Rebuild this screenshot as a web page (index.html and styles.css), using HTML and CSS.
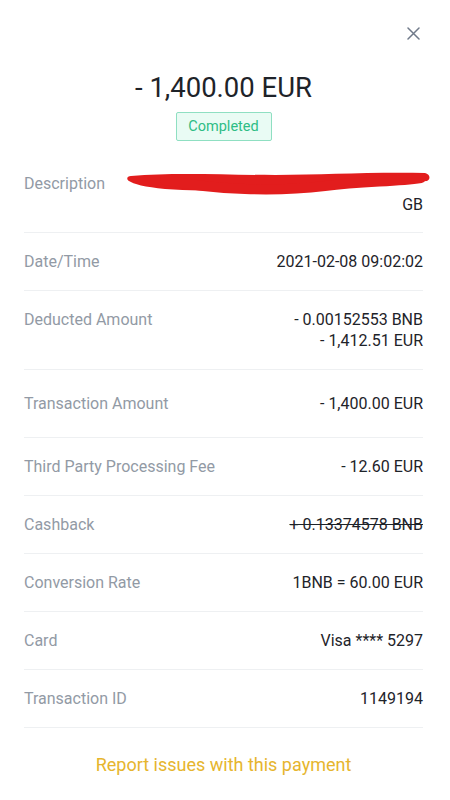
FILE: index.html
```html
<!DOCTYPE html>
<html>
<head>
  <meta charset="utf-8">
  <title>Payment Details</title>
  <link rel="stylesheet" href="styles.css">
</head>
<body>
  <div class="sheet">
    <div class="top">
      <button class="close" aria-label="Close">
        <svg width="13" height="13" viewBox="0 0 13 13">
          <path d="M1 1L12 12M12 1L1 12" stroke="#707a8a" stroke-width="1.5" stroke-linecap="round"/>
        </svg>
      </button>
    </div>

    <div class="summary">
      <h1 class="amount">- 1,400.00 EUR</h1>
      <span class="status">Completed</span>
    </div>

    <div class="details">
      <div class="row desc">
        <span class="label">Description</span>
        <span class="value">
          <span class="redacted">
            <svg width="306" height="26" viewBox="0 0 306 26">
              <path d="M6 6 C50 2 100 5 150 5 C200 5 240 2 300 3 C305 4 306 9 302 11 C260 14 220 15 180 18 C140 22 90 22 40 19 C20 17 8 14 4 11 C1 9 2 6 6 6 Z" fill="#e21d1d"/>
              <path d="M40 10 C90 20 150 22 200 16 C240 11 270 12 296 8" stroke="#e21d1d" stroke-width="10" fill="none" stroke-linecap="round"/>
            </svg>
          </span>
          <span>GB</span>
        </span>
      </div>
      <div class="row">
        <span class="label">Date/Time</span>
        <span class="value">2021-02-08 09:02:02</span>
      </div>
      <div class="row deducted">
        <span class="label">Deducted Amount</span>
        <span class="value">
          <span>- 0.00152553 BNB</span>
          <span>- 1,412.51 EUR</span>
        </span>
      </div>
      <div class="row tall">
        <span class="label">Transaction Amount</span>
        <span class="value">- 1,400.00 EUR</span>
      </div>
      <div class="row">
        <span class="label">Third Party Processing Fee</span>
        <span class="value">- 12.60 EUR</span>
      </div>
      <div class="row">
        <span class="label">Cashback</span>
        <span class="value struck">+ 0.13374578 BNB</span>
      </div>
      <div class="row">
        <span class="label">Conversion Rate</span>
        <span class="value">1BNB = 60.00 EUR</span>
      </div>
      <div class="row">
        <span class="label">Card</span>
        <span class="value">Visa **** 5297</span>
      </div>
      <div class="row">
        <span class="label">Transaction ID</span>
        <span class="value">1149194</span>
      </div>
    </div>

    <a class="report" href="#">Report issues with this payment</a>
  </div>
</body>
</html>
```

FILE: styles.css
```css
body {
  margin: 0;
  background-color: #fff;
  font-family: Roboto, "Liberation Sans", sans-serif;
  color: #1e2329;
}

.sheet {
  padding: 0 27px 0 24px;
}

.top {
  height: 64px;
  display: flex;
  justify-content: flex-end;
  align-items: flex-start;
}

.close {
  margin-top: 27px;
  margin-right: 3px;
  padding: 0;
  border: none;
  background: none;
  cursor: pointer;
}

.summary {
  display: flex;
  flex-direction: column;
  align-items: center;
}

.amount {
  margin: 8px 0 0 0;
  font-size: 27.5px;
  font-weight: 400;
  line-height: 32px;
  color: #1e2329;
}

.status {
  margin-top: 8px;
  width: 94px;
  height: 27px;
  line-height: 27px;
  text-align: center;
  font-size: 14.5px;
  color: #2ebd85;
  background-color: #e9fbf4;
  border: 1px solid #8fdfc2;
  border-radius: 2px;
}

.details {
  margin-top: 14px;
}

.row {
  display: flex;
  justify-content: space-between;
  align-items: flex-start;
  padding: 18px 0;
  line-height: 21px;
  font-size: 16px;
  border-bottom: 1px solid #eef0f2;
}

.row.tall {
  padding: 23px 0;
}

.row.desc {
  padding-bottom: 17px;
}

.label {
  color: #929aa5;
}

.value {
  display: flex;
  flex-direction: column;
  align-items: flex-end;
  text-align: right;
  color: #1e2329;
}

.redacted {
  height: 21px;
  margin-right: -8px;
}

.redacted svg {
  display: block;
  margin-top: -3px;
}

.struck {
  text-decoration: line-through;
}

.report {
  display: block;
  margin-top: 26px;
  text-align: center;
  font-size: 18px;
  color: #e6b52e;
  text-decoration: none;
}
```
